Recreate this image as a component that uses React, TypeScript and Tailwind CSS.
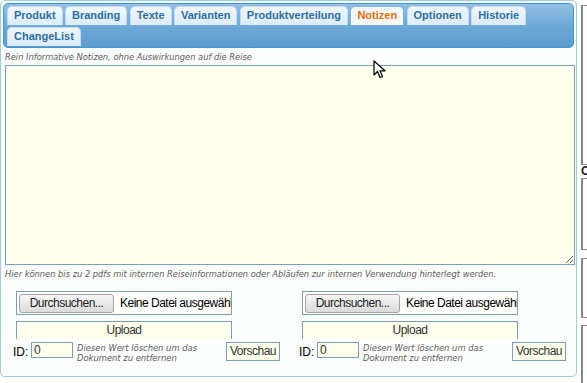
import React from "react"

const tabs = ["Produkt", "Branding", "Texte", "Varianten", "Produktverteilung", "Notizen", "Optionen", "Historie", "ChangeList"]

function Tab({ label }: { label: string }) {
    const active = label === "Notizen"
    return (
        <div
            className={
                active
                    ? "h-[19px] px-[6px] pt-[1px] rounded-t-[5px] border border-b-0 border-[#79b7e7] bg-[#f5f8f9] text-[#e17009] text-[11px] font-bold leading-[14px]"
                    : "h-[19px] px-[6px] pt-[1px] rounded-t-[5px] border border-b-0 border-[#c5dbec] bg-gradient-to-b from-[#f0f7fd] to-[#dbecfb] text-[#2e6e9e] text-[11px] font-bold leading-[14px]"
            }
        >
            {label}
        </div>
    )
}

function UploadColumn() {
    return (
        <div className="w-[286px] shrink-0">
            <div className="ml-[6px] w-[216px] h-[24px] border border-[#7b9ebd] bg-white flex items-center overflow-hidden whitespace-nowrap tracking-[-0.5px]">
                <div className="ml-[2px] w-[95px] h-[19px] shrink-0 rounded-[3px] border border-[#a3a3a3] bg-gradient-to-b from-[#f7f7f7] to-[#dadada] text-[12px] text-[#222] leading-[17px] text-center">
                    Durchsuchen...
                </div>
                <span className="ml-[6px] text-[12px] text-black">Keine Datei ausgewähl</span>
            </div>
            <div className="ml-[6px] mt-[6px] w-[216px] h-[18px] border border-b-0 border-[#7b9ebd] bg-[#ffffee] text-[12px] text-[#333] text-center leading-[16px] tracking-[-0.5px]">
                Upload
            </div>
            <div className="flex items-start mt-[3px]">
                <span className="ml-[3px] mt-[3px] w-[15px] text-[12px] text-black leading-[14px]">ID:</span>
                <div className="ml-[3px] w-[42px] h-[16px] border border-[#7b9ebd] bg-[#ffffee] text-[12px] text-[#333] leading-[14px] pl-[2px]">
                    0
                </div>
                <div className="ml-[4px] mt-[1px] w-[149px] font-['DejaVu_Sans'] italic text-[8.4px] leading-[10px] text-[#5c5c5c]">
                    Diesen Wert löschen um das
                    <br />
                    Dokument zu entfernen
                </div>
                <div className="h-[19px] px-[3px] border border-[#7b9ebd] bg-[#ffffee] text-[12px] text-[#333] leading-[17px] tracking-[-0.5px]">
                    Vorschau
                </div>
            </div>
        </div>
    )
}

function Cursor() {
    return (
        <svg className="absolute left-[373px] top-[60px]" width="14" height="20" viewBox="0 0 14 20">
            <path d="M1 1 L1 15 L4.5 11.5 L7 17.5 L9.5 16.5 L7 10.8 L12 10.8 Z" fill="white" stroke="black" strokeWidth="1.2" strokeLinejoin="round" />
        </svg>
    )
}

export default function App() {
    return (
        <div className="relative w-[587px] h-[383px] overflow-hidden bg-white flex font-['Liberation_Sans',Arial,sans-serif]">
            <div className="w-[577px] h-[377px] shrink-0 border border-[#a6c9e2] rounded-[5px] bg-[#fcfdfd] p-[2px]">
                <div className="h-[45px] rounded-[5px] border border-[#4297d7] bg-gradient-to-b from-[#92bfe3] via-[#6ea9d8] to-[#5c9ccc] pl-[3px] pt-[2px] flex flex-wrap content-start gap-x-[2.4px] gap-y-[2px] overflow-hidden">
                    {tabs.map((t) => (
                        <Tab key={t} label={t} />
                    ))}
                </div>
                <p className="ml-[2px] mt-[4px] font-['DejaVu_Sans'] italic text-[8.3px] leading-[10px] text-[#5c5c5c]">
                    Rein Informative Notizen, ohne Auswirkungen auf die Reise
                </p>
                <textarea
                    className="block ml-[2px] mt-[3px] w-[570px] h-[200px] border border-[#7b9ebd] bg-[#ffffee] outline-none"
                    defaultValue=""
                />
                <p className="ml-[2px] mt-[4px] font-['DejaVu_Sans'] italic text-[8.3px] leading-[10px] text-[#5c5c5c]">
                    Hier können bis zu 2 pdfs mit internen Reiseinformationen oder Abläufen zur internen Verwendung hinterlegt werden.
                </p>
                <div className="flex ml-[7px] mt-[12px]">
                    <UploadColumn />
                    <UploadColumn />
                </div>
            </div>
            <div className="ml-[4px] flex-1 flex flex-col">
                <div className="mt-[5px] h-[166px] border-l-2 border-t border-b border-[#888]" />
                <div className="h-[12px] text-[12px] font-bold text-[#222] leading-[12px]">C</div>
                <div className="mt-[1px] h-[74px] border-l-2 border-t border-b border-[#888]" />
                <div className="mt-[8px] h-[62px] border-l-2 border-t border-b border-[#888]" />
                <div className="mt-[7px] h-[60px] border-l-2 border-t border-[#888]" />
            </div>
            <Cursor />
        </div>
    )
}
